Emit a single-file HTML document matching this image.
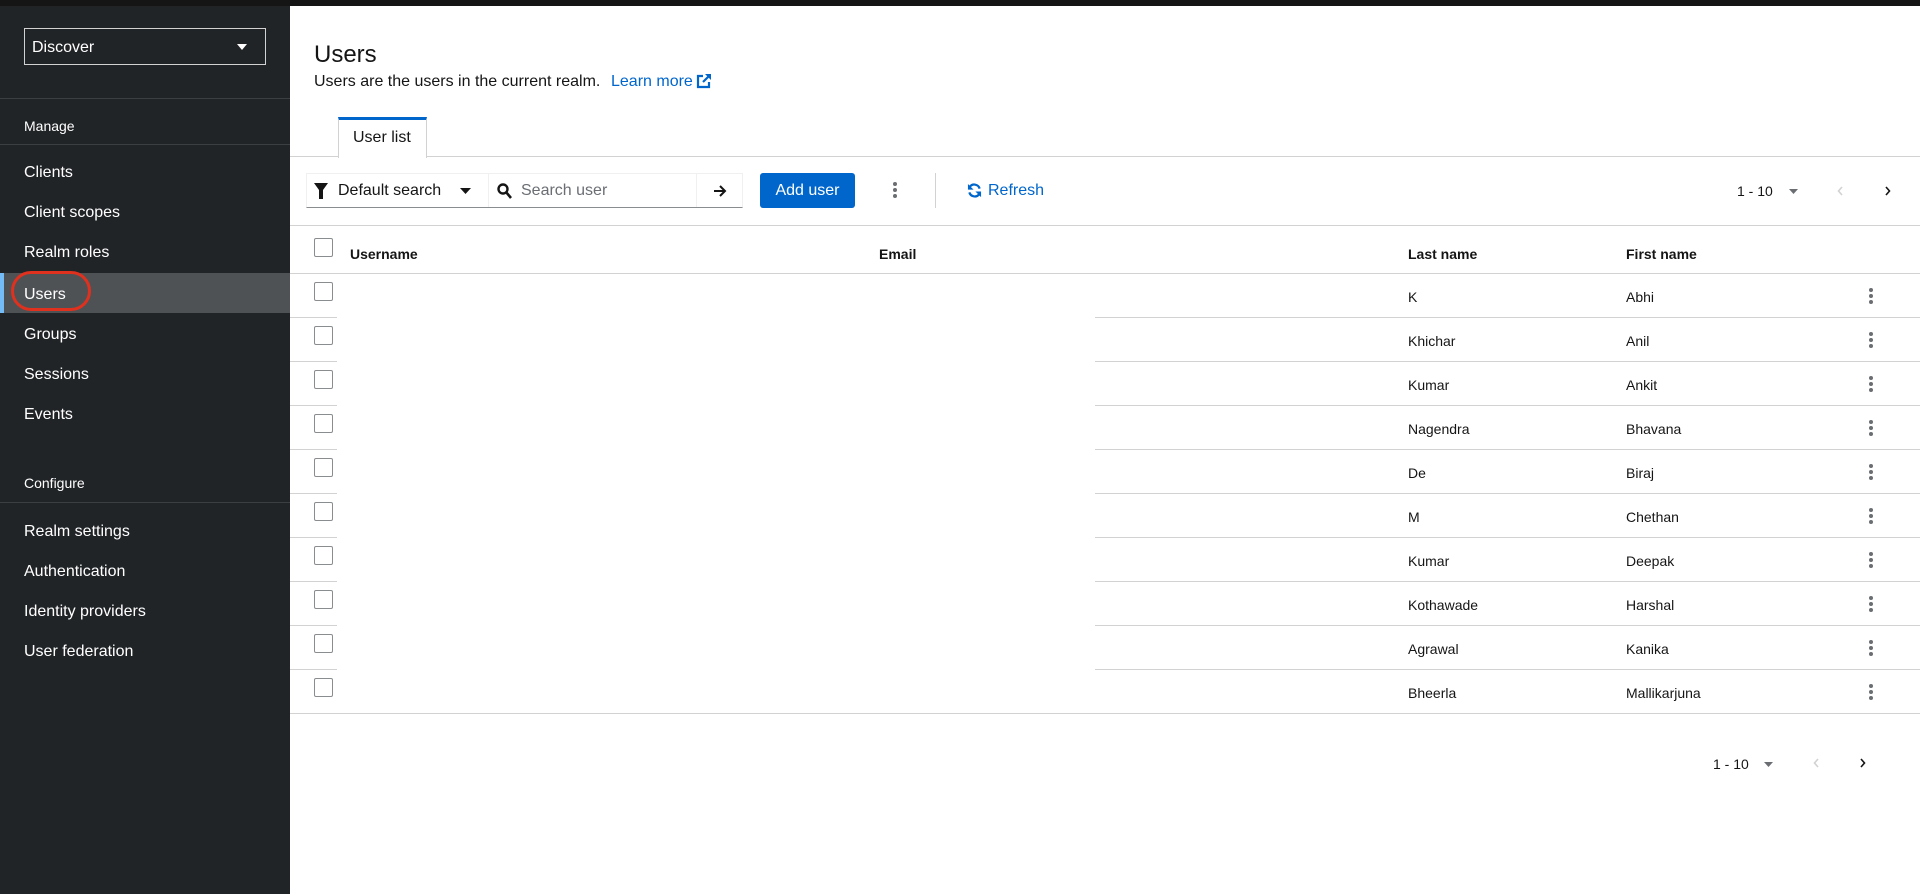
<!DOCTYPE html>
<html><head><meta charset="utf-8"><style>
*{margin:0;padding:0;box-sizing:border-box}
body{width:1920px;height:894px;overflow:hidden;background:#fff;font-family:"Liberation Sans",sans-serif;color:#151515;position:relative}
.a{position:absolute}
#top{left:0;top:0;width:1920px;height:6px;background:#151515}
#side{left:0;top:6px;width:290px;height:888px;background:#212427;color:#fff}
.nav{position:absolute;left:24px;font-size:16px;color:#fff;line-height:20px}
.sec{position:absolute;left:24px;font-size:14px;color:#fff;line-height:18px}
.div{position:absolute;left:0;width:290px;height:1px;background:#3c3f42}
.hl{position:absolute;height:1px;background:#d2d2d2}
.cb{position:absolute;width:19px;height:19px;border:1px solid #8a8d90;border-radius:2px;background:#fff}
.t{position:absolute;font-size:14px;line-height:18px}
.th{position:absolute;font-size:14px;font-weight:bold;line-height:18px}
.keb{position:absolute;width:4px}
.keb i{display:block;width:4px;height:4px;border-radius:2px;background:#6a6e73;margin-bottom:2px}
</style></head><body>
<div class="a" id="top"></div>
<div class="a" id="side">
  <div class="a" style="left:24px;top:22px;width:242px;height:37px;border:1px solid #d2d2d2;"></div>
  <div class="nav" style="left:32px;top:32px;">Discover</div>
  <svg class="a" style="left:237px;top:38px" width="10" height="6"><path d="M0 0h10L5 6z" fill="#fff"/></svg>
  <div class="div" style="top:92px"></div>
  <div class="sec" style="top:111px">Manage</div>
  <div class="div" style="top:138px"></div>
  <div class="nav" style="top:157px">Clients</div>
  <div class="nav" style="top:197px">Client scopes</div>
  <div class="nav" style="top:237px">Realm roles</div>
  <div class="a" style="left:0;top:267px;width:290px;height:40px;background:#4f5255;border-left:4px solid #73bcf7"></div>
  <div class="nav" style="top:279px">Users</div>
  <div class="a" style="left:11px;top:265px;width:80px;height:40px;border:3px solid #e0301e;border-radius:22px"></div>
  <div class="nav" style="top:319px">Groups</div>
  <div class="nav" style="top:359px">Sessions</div>
  <div class="nav" style="top:399px">Events</div>
  <div class="sec" style="top:468px">Configure</div>
  <div class="div" style="top:496px"></div>
  <div class="nav" style="top:516px">Realm settings</div>
  <div class="nav" style="top:556px">Authentication</div>
  <div class="nav" style="top:596px">Identity providers</div>
  <div class="nav" style="top:636px">User federation</div>
</div>

<div class="a" style="left:314px;top:41px;font-size:24px;line-height:28px;">Users</div>
<div class="a" style="left:314px;top:72px;font-size:16px;line-height:20px;">Users are the users in the current realm.</div>
<div class="a" style="left:611px;top:72px;font-size:16px;line-height:20px;color:#0066cc">Learn more</div>
<svg class="a" style="left:696px;top:73px" width="16" height="16" viewBox="0 0 16 16"><path d="M7 3H2v11h11V9" fill="none" stroke="#0066cc" stroke-width="2.2"/><path d="M9 1h6v6z" fill="#0066cc"/><path d="M14 2L7 9" stroke="#0066cc" stroke-width="2.2"/></svg>

<div class="a" style="left:338px;top:117px;width:89px;height:41px;border:1px solid #d2d2d2;border-bottom:none;border-top:3px solid #06c;background:#fff;z-index:2"></div>
<div class="a" style="left:353px;top:129px;font-size:16px;z-index:3">User list</div>
<div class="hl" style="left:290px;top:156px;width:1630px"></div>

<div class="a" style="left:306px;top:173px;width:437px;height:35px;border:1px solid #f0f0f0;border-bottom:1px solid #8a8d90"></div>
<div class="a" style="left:488px;top:173px;width:1px;height:34px;background:#f0f0f0"></div>
<div class="a" style="left:696px;top:173px;width:1px;height:34px;background:#f0f0f0"></div>
<svg class="a" style="left:314px;top:183px" width="14" height="16" viewBox="0 0 14 16"><path d="M0 0h14L9 7v9H5V7z" fill="#151515"/></svg>
<div class="a" style="left:338px;top:182px;font-size:16px">Default search</div>
<svg class="a" style="left:460px;top:188px" width="11" height="7"><path d="M0 0h11L5.5 6z" fill="#151515"/></svg>
<svg class="a" style="left:497px;top:183px" width="15" height="16" viewBox="0 0 15 16"><circle cx="6" cy="6" r="4.5" fill="none" stroke="#151515" stroke-width="2.4"/><path d="M9 9l5 6" stroke="#151515" stroke-width="2.6"/></svg>
<div class="a" style="left:521px;top:182px;font-size:16px;color:#6a6e73">Search user</div>
<svg class="a" style="left:713px;top:184px" width="14" height="14" viewBox="0 0 14 14"><path d="M1 7h11M7 2l5 5-5 5" fill="none" stroke="#151515" stroke-width="2"/></svg>

<div class="a" style="left:760px;top:173px;width:95px;height:35px;background:#06c;border-radius:3px;color:#fff;font-size:16px;line-height:36px;text-align:center">Add user</div>
<div class="keb" style="left:893px;top:182px"><i></i><i></i><i></i></div>
<div class="a" style="left:935px;top:173px;width:1px;height:35px;background:#d2d2d2"></div>
<svg class="a" style="left:967px;top:183px" width="15" height="15" viewBox="0 0 16 16"><path d="M13.5 6A6 6 0 0 0 3 4M2.5 10A6 6 0 0 0 13 12" fill="none" stroke="#06c" stroke-width="2.4"/><path d="M1 1v6h6zM15 15V9H9z" fill="#06c"/></svg>
<div class="a" style="left:988px;top:182px;font-size:16px;color:#06c">Refresh</div>

<div class="a" style="left:1737px;top:183px;font-size:14px">1 - 10</div>
<svg class="a" style="left:1789px;top:189px" width="9" height="5"><path d="M0 0h9L4.5 5z" fill="#6a6e73"/></svg>
<svg class="a" style="left:1837px;top:186px" width="6" height="10"><path d="M5 1L1.5 5 5 9" fill="none" stroke="#d2d2d2" stroke-width="1.6"/></svg>
<svg class="a" style="left:1885px;top:186px" width="6" height="10"><path d="M1 1l3.5 4L1 9" fill="none" stroke="#151515" stroke-width="1.6"/></svg>

<div class="hl" style="left:290px;top:225px;width:1630px"></div>
<div class="cb" style="left:314px;top:238px"></div>
<div class="th" style="left:350px;top:245px">Username</div>
<div class="th" style="left:879px;top:245px">Email</div>
<div class="th" style="left:1408px;top:245px">Last name</div>
<div class="th" style="left:1626px;top:245px">First name</div>
<div class="hl" style="left:290px;top:273px;width:1630px"></div>

<div id="rows"></div>
<script>
var d=[["K","Abhi"],["Khichar","Anil"],["Kumar","Ankit"],["Nagendra","Bhavana"],["De","Biraj"],["M","Chethan"],["Kumar","Deepak"],["Kothawade","Harshal"],["Agrawal","Kanika"],["Bheerla","Mallikarjuna"]];
var h="";
for(var i=0;i<10;i++){var y=273+i*44;
h+='<div class="cb" style="left:314px;top:'+(y+9)+'px"></div>';
h+='<div class="t" style="left:1408px;top:'+(y+15)+'px">'+d[i][0]+'</div>';
h+='<div class="t" style="left:1626px;top:'+(y+15)+'px">'+d[i][1]+'</div>';
h+='<div class="keb" style="left:1869px;top:'+(y+15)+'px"><i></i><i></i><i></i></div>';
if(i<9){h+='<div class="hl" style="left:290px;top:'+(y+44)+'px;width:47px"></div><div class="hl" style="left:1095px;top:'+(y+44)+'px;width:825px"></div>';}
else{h+='<div class="hl" style="left:290px;top:'+(y+44)+'px;width:1630px"></div>';}
}
document.getElementById("rows").innerHTML=h;
</script>

<div class="a" style="left:1713px;top:756px;font-size:14px">1 - 10</div>
<svg class="a" style="left:1764px;top:762px" width="9" height="5"><path d="M0 0h9L4.5 5z" fill="#6a6e73"/></svg>
<svg class="a" style="left:1813px;top:758px" width="6" height="10"><path d="M5 1L1.5 5 5 9" fill="none" stroke="#d2d2d2" stroke-width="1.6"/></svg>
<svg class="a" style="left:1860px;top:758px" width="6" height="10"><path d="M1 1l3.5 4L1 9" fill="none" stroke="#151515" stroke-width="1.6"/></svg>
</body></html>
